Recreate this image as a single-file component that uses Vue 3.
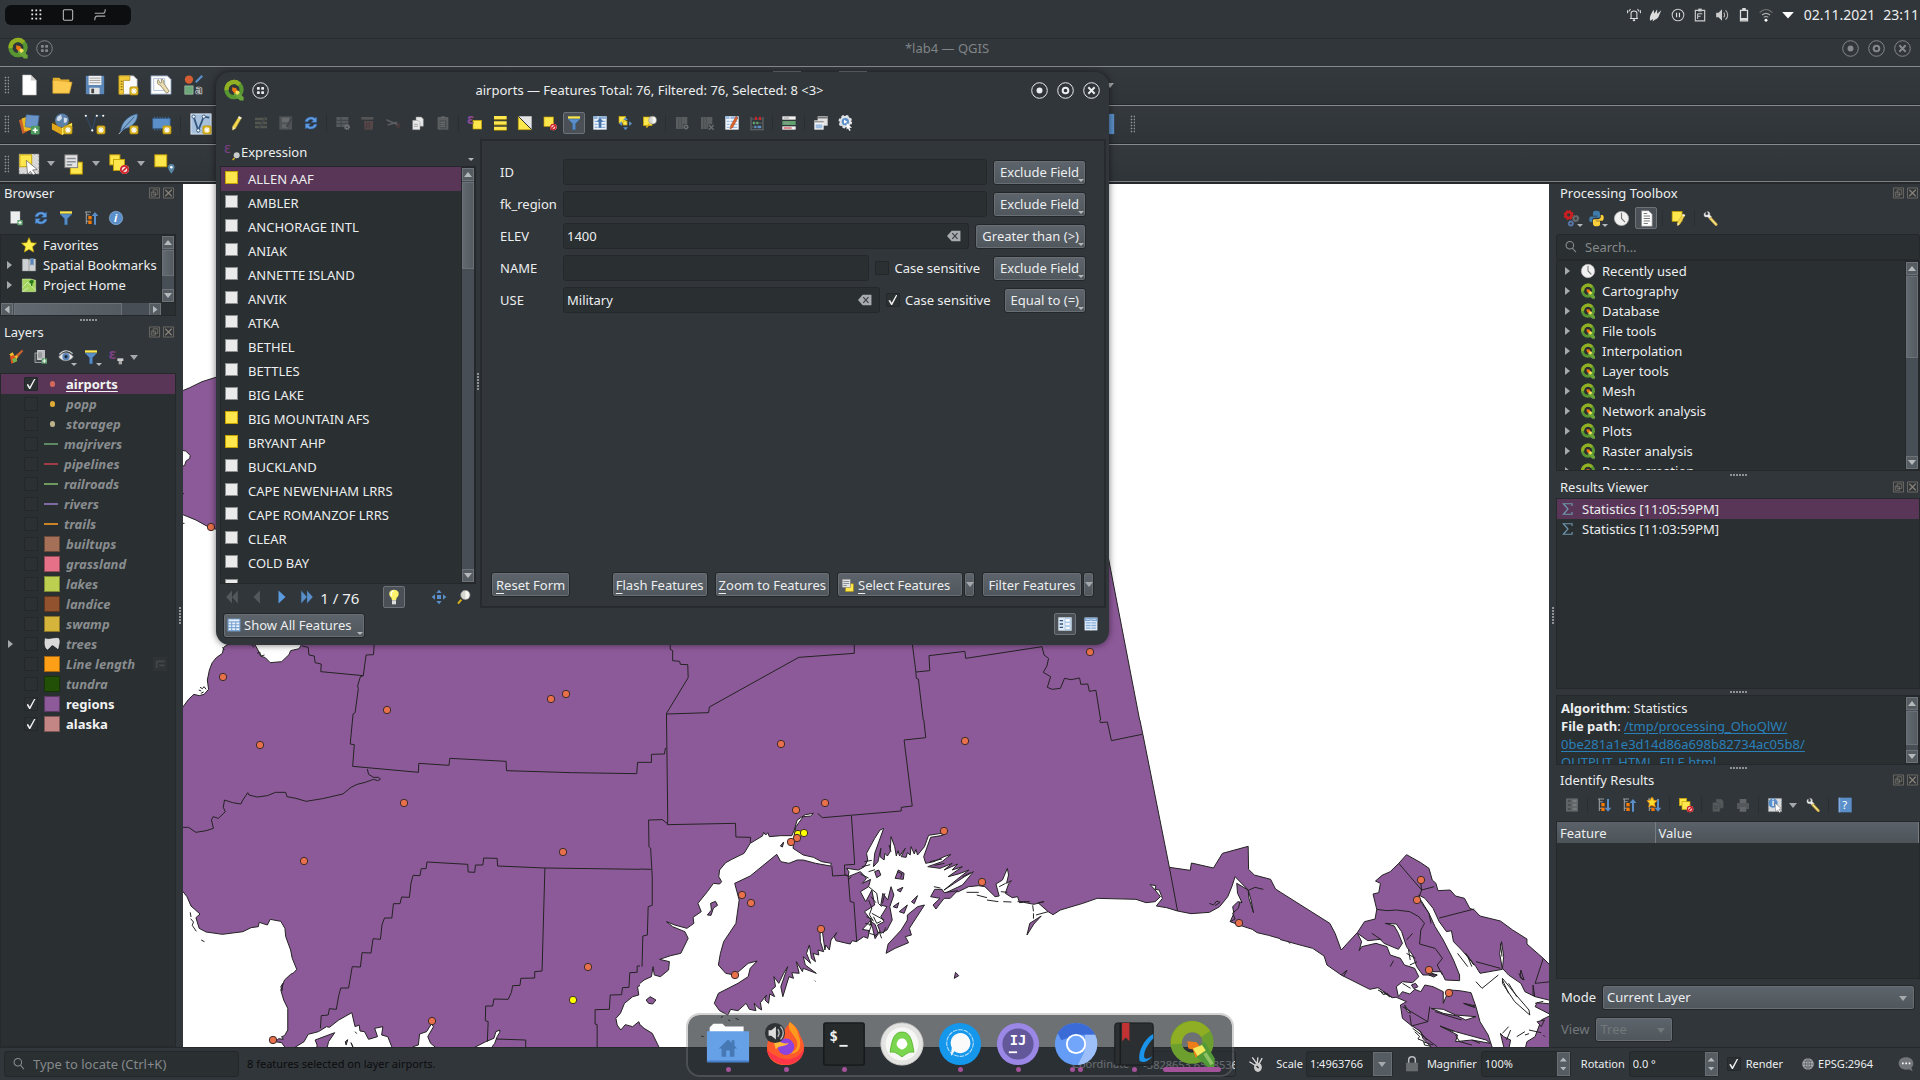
<script setup>
import { ref } from 'vue'

const star = (x, y) => `<rect x="${x}" y="${y}" width="9" height="9" rx="1.5" fill="#d9b21c" stroke="#a8860c" stroke-width=".6"/><path d="M${x + 4.5} ${y + 1.2}v6.6M${x + 1.2} ${y + 4.5}h6.6M${x + 2.2} ${y + 2.2}l4.6 4.6M${x + 6.8} ${y + 2.2}l-4.6 4.6" stroke="#fff" stroke-width="1.1"/>`
const sel = (x, y, s) => `<rect x="${x}" y="${y}" width="${s}" height="${s}" fill="#fde74c" stroke="#c4a000" stroke-width="1"/>`
const no = (x, y) => `<circle cx="${x}" cy="${y}" r="5" fill="#fff"/><circle cx="${x}" cy="${y}" r="4" fill="#f3d9d9" stroke="#cc2127" stroke-width="2"/><path d="M${x - 3} ${y + 3}l6-6" stroke="#cc2127" stroke-width="1.8"/>`
const table = (c, b) => `<rect x="2" y="2" width="20" height="20" fill="${c}"/><path d="M2 4h20" stroke="${b}" stroke-width="4"/><path d="M4 9.500h16M4 14h16M4 18.500h16" stroke="${b}" stroke-width="2"/><path d="M9 2v20" stroke="${c}" stroke-width="1.400"/>`
const tree = '<path d="M5 3v18M5 7h5M5 17h5M3 3h9" stroke="#9a9da0" stroke-width="1.6" fill="none"/><rect x="8" y="9" width="5" height="5" fill="#f57900"/><rect x="8" y="16" width="5" height="5" fill="#f57900"/>'
const funnel = '<path d="M3 6h18l-7 7v9h-4v-9z" fill="#5b8fc9" stroke="#3a6ea5" stroke-width="1"/><rect x="3" y="2" width="18" height="3.4" fill="#fde74c"/>'
const wrench = '<path d="M5 3c-3 1-3 6 0 7l3 0 3 3 3-3-3-3c1-3-1-5-4-5l2 3-1 2-3 0z" fill="#eee" stroke="#999" stroke-width=".6"/><path d="M12 12l8 8.5" stroke="#d8b94a" stroke-width="4" stroke-linecap="round"/><path d="M12 12l8 8.5" stroke="#fae8a0" stroke-width="1.5"/>'
const refresh = '<path d="M3 10C4 3 14 1 18 5l2.500-2v8h-8l3-3c-4-3-7-1-8 2zM21 14c-1 7-11 9-15 5l-2.500 2v-8h8l-3 3c4 3 7 1 8-2z" fill="#5f9be0" stroke="#2d66ab" stroke-width=".7"/>'
const pencil = '<path d="M16.500 2l4 2-9 16-4.500 3-.5-5.500z" fill="#f3d64e" stroke="#97832b" stroke-width=".7"/><path d="M16.500 2l4 2-1.500 2.500-4-2z" fill="#eee"/><path d="M7 18l3.500 2-3.500 3z" fill="#f7ead0"/>'
const qgis = '<circle cx="12" cy="11.500" r="8.300" fill="none" stroke="#589632" stroke-width="4.600"/><path d="M4 12a8 8 0 0 1 14-6" fill="none" stroke="#93b023" stroke-width="4.600"/><path d="M13.500 11l9 9v3.500h-4l-7-7z" fill="#6ba539"/><path d="M10 9l4.500 1 1.500 4-3.500 1.500-2.500-3z" fill="#ee7913"/><path d="M14 13l2.500-.5 2 2.500-3 2.500-2-2z" fill="#f5e35a"/>'
const doc = (a, b) => `<path d="M9 3h8l3 3v11H9z" fill="${a}" stroke="${b}" stroke-width=".8"/><path d="M4 8h8l3 3v11H4z" fill="${a}" stroke="${b}" stroke-width=".8"/><path d="M6 14h6M6 17h6" stroke="${b}"/>`
const lens = '<path d="M3 22l5-6" stroke="#d8b21c" stroke-width="3"/><circle cx="14" cy="9" r="7" fill="#d6d6d0" stroke="#888" stroke-width="1"/><path d="M14 3a6 6 0 0 1 0 12z" fill="#f4f4f0"/>'
const pan = '<path d="M12 1l4 5h-8zM12 23l4-5h-8zM1 12l5-4v8zM23 12l-5-4v8zM9 9h6v6H9z" fill="#5b8fc9"/>'
const gear = (x, y, r, c) => `<circle cx="${x}" cy="${y}" r="${r}" fill="none" stroke="${c}" stroke-width="${r * 0.9}"/><circle cx="${x}" cy="${y}" r="${r * 1.4}" fill="none" stroke="${c}" stroke-width="${r * 0.6}" stroke-dasharray="${r * 0.6} ${r * 0.5}"/>`

const icons = {
  qgis, refresh, pencil, funnel, wrench, lens, pan,
  newdoc: '<path d="M5 1h9l6 6v16H5z" fill="#fff" stroke="#aaa" stroke-width=".6"/><path d="M14 1v6h6z" fill="#ccc"/>',
  open: '<path d="M2 4h7l2 2h9v4H2z" fill="#e0ad2d"/><path d="M2 21V7h4l17 2-3 12z" fill="#fcca4e" stroke="#d9a32a" stroke-width=".7"/>',
  save: '<path d="M2 2h20v20H2z" fill="#5b86b8"/><rect x="5" y="2" width="14" height="10" fill="#f1f1f1"/><path d="M6 4.500h12M6 7h12M6 9.500h12" stroke="#999" stroke-width="1"/><rect x="6" y="15" width="11" height="7" fill="#e4e4e4"/><rect x="8" y="16" width="3" height="5" fill="#444"/>',
  layout: '<path d="M3 2h15l4 4v16H3z" fill="#fafafa" stroke="#aaa" stroke-width=".7"/><path d="M2 2h12v5H7v15H2z" fill="#f3c93a" stroke="#ad8a10" stroke-width=".8"/><path d="M4 8h2M4 11h2M4 14h2M4 17h2" stroke="#6e5a10"/>' + star(14, 14),
  manager: '<path d="M1 2h18l4 4v16H1z" fill="#fdfdfd" stroke="#7188a8" stroke-width=".8"/><path d="M4 5h12v13H4z" fill="none" stroke="#8fa9cd" stroke-width=".7"/><path d="M9 6c-2 2-1 6 2 6l7 9 3-2-6-9c1-3-2-5-3-4l1 3-2 1z" fill="#eadcae" stroke="#7c7356" stroke-width=".8"/>',
  style: '<circle cx="6.500" cy="6" r="4.500" fill="#d55e32"/><path d="M14 9l7-7" stroke="#5b8fc9" stroke-width="2.400"/><rect x="2" y="13" width="9" height="9" fill="#6ea77a" stroke="#a9cbb0" stroke-width=".7"/><text x="13" y="22" font-size="14" font-weight="bold" fill="none" stroke="#ccc" stroke-width=".8">a</text>',
  source: '<path d="M1 8l9-4 4 14-9 5z" fill="#c8622c"/><path d="M4 6l10-3 2 15-9 2z" fill="#e6b821"/><path d="M9 2l14 1-2 14-13-2z" fill="#6a94c8" stroke="#4470a5" stroke-width=".7"/><rect x="14" y="14" width="9.500" height="9.500" rx="1.500" fill="#4f9a5f"/><path d="M18.750 16v5.500M16 18.750h5.500" stroke="#fff" stroke-width="1.700"/>',
  geopackage: '<path d="M1 11l11 5v8L1 18zM12 16l11-5v7l-11 6z" fill="#e0a71a"/><path d="M1 11l11-5 11 5-11 5z" fill="#5e4a10"/><path d="M12 16l11-5v7l-11 6z" fill="#fdeb53"/><circle cx="12" cy="8" r="7.500" fill="#5b80aa"/><path d="M7 4l4-2 1 4-3 3-3-1zM14 5l4 1-1 4-3 1z" fill="#cfdbe8"/>' + star(14, 14),
  shape: '<path d="M2 3l7 16L13 3M13 3h8" fill="none" stroke="#2f4a66" stroke-width="1.300"/><g fill="#fff"><circle cx="2" cy="3" r="1.200"/><circle cx="9" cy="19" r="1.200"/><circle cx="14" cy="3" r="1.200"/><circle cx="21" cy="3" r="1.200"/></g>' + star(14, 14),
  spatialite: '<path d="M2 23L20 3" stroke="#bcd" stroke-width="1"/><path d="M4 20C5 10 12 3 22 1c1 7-5 14-13 16z" fill="#7fa8d0" stroke="#3e6a9a" stroke-width=".8"/><path d="M6 18L19 4" stroke="#2e5680" stroke-width="1"/>' + star(14, 14),
  memory: '<path d="M5 4v15M8 4v15M11 4v15M14 4v15M17 4v15M20 4v15" stroke="#43678f" stroke-width="1.200"/><rect x="3" y="6" width="19" height="11" fill="#5b8fc9" stroke="#33608f" stroke-width=".8"/>' + star(14, 14),
  virtual: '<rect x="1" y="1" width="22" height="22" fill="#a7c1dd" stroke="#dfe8f2"/><path d="M4 4l5 15L15 4l6 1" fill="none" stroke="#31557c" stroke-width="2"/><g fill="#fff" stroke="#31557c"><circle cx="4" cy="4" r="1.800"/><circle cx="9" cy="19" r="1.800"/><circle cx="15" cy="4" r="1.800"/></g>' + star(14, 14),
  help: '<rect x="2" y="1" width="20" height="22" fill="#5b8fc9"/><path d="M4 1v22" stroke="#a9c5e5"/><text x="8" y="18" font-size="17" fill="#fff">?</text>',
  select: '<path d="M1 1h22v22H1z" fill="#d8d8d8" stroke="#555" stroke-dasharray="2 2"/>' + sel(2, 2, 13) + '<path d="M9 8l12 10-5 .5 3 4-2.500 1.500-3-4-3 3.500z" fill="#fff" stroke="#333" stroke-width=".6"/>',
  selform: sel(8, 10, 13) + '<rect x="2" y="2" width="14" height="14" fill="#e3e3e3" stroke="#777"/><path d="M4 6h10M4 9.500h10M4 13h6" stroke="#8a9099" stroke-width="1.800"/>',
  desel: sel(2, 2, 11) + sel(6, 7, 12) + no(18, 18),
  selloc: sel(2, 2, 13) + '<path d="M20 12a3.500 3.500 0 0 1 3.500 3.500c0 3-3.500 7-3.500 7s-3.500-4-3.500-7a3.500 3.500 0 0 1 3.500-3.500z" fill="#5a86a5"/><circle cx="20" cy="15.500" r="1.400" fill="#fff"/>',
  add: '<rect x="4" y="2" width="14" height="18" fill="#eee" stroke="#aaa" stroke-width=".6"/><rect x="14" y="15" width="8" height="8" rx="1" fill="#5fa06c"/><path d="M18 16.500v5M15.500 19h5" stroke="#fff" stroke-width="1.500"/>',
  collapse: tree + '<path d="M18 3l5 6h-3.500v13h-3V9H13z" fill="#5b8fc9"/>',
  expand: tree + '<path d="M18 22l5-6h-3.500V3h-3v13H13z" fill="#5b8fc9"/>',
  expandnew: tree + '<path d="M18 22l5-6h-3.500V3h-3v13H13z" fill="#5b8fc9"/><path d="M9 0l2.500 5 5 .5-4 4 1.500 5.500-5-3-5 3 1.500-5.500-4-4 5-.5z" fill="#fde02c" stroke="#f58a00" stroke-width="1"/>',
  info: '<circle cx="12" cy="12" r="10" fill="#5b8fc9" stroke="#8fb3dd"/><text x="9" y="18" font-size="16" font-style="italic" font-weight="bold" fill="#fff">i</text>',
  fav: '<path d="M12 1l3.200 7.500 8 .7-6 5.400 1.800 8L12 18.500 5 22.600l1.800-8-6-5.400 8-.7z" fill="#fdf04c" stroke="#c9a400" stroke-width=".9"/>',
  bookmark: '<path d="M2 3h9l1 2 1-2h9v18H2z" fill="#cfd2d4" stroke="#888" stroke-width=".7"/><path d="M12 5v16" stroke="#888"/><path d="M14 2h5v11l-2.500-2-2.500 2z" fill="#5b86b8"/>',
  home: '<path d="M2 3h12l8 2v17H2z" fill="#a4d65e" stroke="#d8efb4" stroke-width=".8"/><path d="M2 16l8-8 12 12M2 22l9-6" stroke="#e9f7d2" fill="none"/><path d="M15 5c4-2 6 3 2 5l0 4-2-1 0-3c-4-1-3-5 0-5z" fill="#2b7a1e"/>',
  stylebrush: '<path d="M2 8l5-3 3 6 9-7-8 15z" fill="#f2c230"/><path d="M12 9l9-8 2 2-8 9z" fill="#c8622c"/><path d="M3 11l6-2 5 9-9 4z" fill="#e0511f"/><path d="M6 15l6-2 2 5-6 3z" fill="#6eb54b"/>',
  addgroup: '<rect x="3" y="6" width="12" height="14" fill="#444b50" stroke="#ccc"/><rect x="7" y="2" width="10" height="14" fill="#b9bcbe" stroke="#eee"/><path d="M9 5v8M12 5v8" stroke="#555"/><rect x="13" y="14" width="8" height="8" fill="#5fa06c"/><path d="M17 15v6M14 18h6" stroke="#fff" stroke-width="1.400"/>',
  eye: '<path d="M1 12c5-8 16-9 22 0-6 7-16 8-22 0z" fill="#e8e8e8" stroke="#888"/><circle cx="12" cy="11.500" r="5.500" fill="#5b86b8"/><circle cx="12" cy="11.500" r="2.400" fill="#1c2d3e"/><path d="M2 8C8 1 16 1 22 7" fill="none" stroke="#cfd3d6" stroke-width="1.800"/>',
  epsfilter: '<text x="1" y="15" font-size="22" font-weight="bold" fill="#7b4184">ε</text><rect x="14" y="14" width="9" height="4" fill="#ccc"/><path d="M16 18v5h5v-5" fill="#aaa"/>',
  epslens: '<text x="0" y="14" font-size="22" fill="#7b4184">ε</text><path d="M13 24l3-3" stroke="#d8b21c" stroke-width="2.500"/><circle cx="19" cy="17" r="4.500" fill="#ccc"/>',
  epssel: sel(9, 8, 13) + '<text x="0" y="14" font-size="21" font-weight="bold" fill="#8a4a94">ε</text>',
  multiedit: '<path d="M3 6h18M3 12h18M3 18h18" stroke="#54574f" stroke-width="4"/><path d="M19 3L9 20" stroke="#44484b" stroke-width="3"/>',
  saveoff: '<path d="M2 2h19v20H2z" fill="#4f5356"/><rect x="6" y="4" width="11" height="7" fill="#686b6d"/><rect x="6" y="14" width="9" height="6" fill="#626567"/><path d="M21 4L13 18" stroke="#42464a" stroke-width="3"/>',
  addfeat: '<path d="M2 3h18v15H2z" fill="#555a5d"/><path d="M2 8h18M2 13h18M9 3v15" stroke="#3d4246" stroke-width="1.300"/>' + gear(18, 18, 2.6, '#6c6f72'),
  trash: '<path d="M2 3h18v4H2z" fill="#565555"/><path d="M6 9h14l-1 13H7z" fill="#564648"/><path d="M10 11v9M14 11v9" stroke="#433a3c" stroke-width="1.500"/>',
  cut: '<path d="M2 7l18 8M4 15l14-4" stroke="#5a5e61" stroke-width="2.400"/><circle cx="20" cy="16" r="2.500" fill="none" stroke="#5a3b3e" stroke-width="1.500"/>',
  copy: doc('#e9e9e9', '#8d8d8d'), copyoff: doc('#54595c', '#3d4245'),
  paste: '<path d="M4 3h16v19H4z" fill="#5b5f62"/><path d="M7 8h10v12H7z" fill="#4a4e51"/><path d="M8 11h7M8 14h7M8 17h7M9 3h6" stroke="#6d7174" stroke-width="1.600"/>',
  selall: '<path d="M3 4h19M3 12h19M3 20h19" stroke="#fde74c" stroke-width="5"/><path d="M3 7h19M3 15h19M3 23h19" stroke="#c4a000" stroke-width="1"/>',
  invert: '<path d="M2 2v20h20z" fill="#fde74c" stroke="#c4a000"/><path d="M2 2h20v20z" fill="#e4e4e4"/><path d="M2 2l20 20" stroke="#333" stroke-width="1.500"/>',
  desel1: sel(3, 3, 14) + no(17, 18),
  movetop: table('#e9f1fb', '#8db2dc') + '<path d="M12 4l5 6h-3v9h-4v-9H7z" fill="#4470a5"/>',
  panmap: sel(3, 2, 10) + '<g transform="translate(2 2) scale(.9)">' + pan + '</g>' + sel(9, 9, 6),
  zoommap: sel(2, 3, 13) + '<g transform="translate(4 0) scale(.85)">' + lens + '</g>',
  newfield: '<path d="M3 3h11v18H3zM14 3h6v11h-6z" fill="#595d60"/><path d="M7 3v18M11 3v18" stroke="#44484b"/>' + gear(18, 18, 2.4, '#6c6f72'),
  delfield: '<path d="M3 3h11v18H3zM14 3h6v11h-6z" fill="#595d60"/><path d="M7 3v18M11 3v18" stroke="#44484b"/><path d="M15 15l7 7M22 15l-7 7" stroke="#6c6f72" stroke-width="2"/>',
  calc: table('#f3f7fc', '#9dbde2') + '<path d="M18 2l3 2-8 15-4 2 1-5z" fill="#d9622e" stroke="#8a3d18" stroke-width=".6"/>',
  abacus: '<path d="M3 3v19M21 3v19M2 22h20" stroke="#686b6d" stroke-width="1.600"/><path d="M4 6h16M4 12h16M4 18h16" stroke="#888" stroke-width=".8"/><path d="M9 5h3M15 5h3" stroke="#cc2127" stroke-width="5"/><path d="M6 12h3M11 12h3" stroke="#5fa06c" stroke-width="4"/><path d="M8 18h3M13 18h5" stroke="#5b8fc9" stroke-width="4"/>',
  condfmt: '<rect x="2" y="2" width="20" height="5" fill="#f1f1f1"/><rect x="2" y="9" width="20" height="6" fill="#5fa06c"/><rect x="2" y="17" width="20" height="5" fill="#f1f1f1"/><path d="M4 4.500h8M4 12h9" stroke="#999" stroke-width="1.500"/><path d="M4 19.500h12" stroke="#cc2127" stroke-width="1.500"/>',
  dockwin: '<rect x="7" y="2" width="15" height="14" fill="#e3e3e3"/><path d="M7 4h15" stroke="#777" stroke-width="2.500"/><rect x="2" y="8" width="14" height="14" fill="#f3f3f3"/><path d="M2 10h14" stroke="#999" stroke-width="2.500"/><path d="M4 14h10v6H4z" fill="#9dbde2"/>',
  actions: gear(11, 10, 6, '#dfe3e8') + '<circle cx="11" cy="10" r="5.500" fill="#5b8fc9"/><path d="M9 7l5 3-5 3z" fill="#fff"/><path d="M13 12l8 7-4 0 2 4-2 1-2-4-2 2z" fill="#fff"/>',
  gears: gear(8, 7, 4.2, '#cc1f1f') + gear(18, 12, 3, '#686c6f') + gear(11, 19, 2.6, '#5878a8'),
  python: '<path d="M12 1c-5 0-5 2-5 4v3h6v1H4c-3 0-3 8 0 8h2v-3c0-2 2-3 4-3h5c2 0 2-1 2-3V5c0-3-2-4-5-4z" fill="#3f7cac"/><path d="M12 23c5 0 5-2 5-4v-3h-6v-1h9c3 0 3-8 0-8h-2v3c0 2-2 3-4 3H9c-2 0-2 1-2 3v3c0 3 2 4 5 4z" fill="#fdd03b"/>',
  clock: '<circle cx="12" cy="12" r="10" fill="#f1f1f1" stroke="#bbb"/><path d="M12 4v8l5 5" stroke="#777" stroke-width="1.600" fill="none"/>',
  results: '<path d="M5 1h10l5 5v17H5z" fill="#fff" stroke="#888"/><path d="M8 5h5M8 8.500h9M8 12h9M8 15.500h9M8 19h6" stroke="#777" stroke-width="1.400"/>',
  editinplace: sel(3, 2, 14) + '<g transform="translate(5 4) scale(.8)">' + pencil + '</g>',
  search: '<circle cx="10" cy="9" r="6.500" fill="none" stroke="#8b8f92" stroke-width="1.800"/><path d="M14.500 14l6 7" stroke="#8b8f92" stroke-width="1.800"/>',
  sigma: '<path d="M19 7V3H4l8 9-8 9h15v-4M4 3l8 9M19 3v4" fill="none" stroke="#6d96ad" stroke-width="2"/>',
  formoff: '<rect x="3" y="2" width="18" height="20" fill="#5f6467"/><path d="M6 6h4M6 12h4M6 18h4" stroke="#43484b" stroke-width="2"/><path d="M13 4h6v4h-6zM13 10h6v4h-6zM13 16h6v4h-6z" fill="#777b7e"/>',
  print: '<path d="M3 9h18v9H3z" fill="#54585b"/><path d="M7 3h10v6H7zM7 15h10v7H7z" fill="#626669"/>',
  identify: '<path d="M2 2h20v20H2z" fill="#d9dcdf" stroke="#777" stroke-dasharray="2 2"/><circle cx="9" cy="9" r="7" fill="#5b8fc9"/><text x="7" y="13" font-size="12" font-weight="bold" fill="#fff">i</text><path d="M12 9l10 9-4 .5 2.500 4-2 1-2.500-4-3 3z" fill="#fff" stroke="#444" stroke-width=".6"/>',
  first: '<path d="M12 1v22L2 12zM22 1v22L12 12z" fill="#53585c"/>',
  prev: '<path d="M17 1v22L6 12z" fill="#53585c"/>',
  next: '<path d="M6 1v22l12-11z" fill="#5b9be0"/>',
  last: '<path d="M2 1v22l10-11zM12 1v22l10-11z" fill="#5b8fc9" stroke="#31557c" stroke-width=".6"/>',
  bulb: '<path d="M12 1c8 0 9 8 4 12l-1 4H9l-1-4C3 9 4 1 12 1z" fill="#fbf36a"/><path d="M11 3c-4 1-4 5-2 7" stroke="#fff" stroke-width="2" fill="none"/><rect x="9" y="17" width="6" height="6" fill="#ddd"/>',
  formview: '<rect x="2" y="2" width="20" height="20" fill="#dfeaf7"/><path d="M4 7h5M4 12h5M4 17h5" stroke="#31557c" stroke-width="2"/><path d="M12 4h8v5h-8zM12 10h8v4h-8zM12 16h8v4h-8z" fill="#fff" stroke="#8db2dc" stroke-width="1"/>',
  tableview: '<rect x="1" y="1" width="22" height="22" fill="#e4eefa"/><path d="M1 4h22" stroke="#7ba4d2" stroke-width="6"/><path d="M3 10h18M3 14.500h18M3 19h18" stroke="#86aeda" stroke-width="2.400"/><path d="M12 3v20M3 4h7M14 4h7" stroke="#e9f1fb" stroke-width="1.200"/>',
  tablesm: '<rect x="1" y="1" width="22" height="22" fill="#7ba4d2"/><path d="M3 4h18M3 9h4M9 9h5M16 9h5M3 14h4M9 14h5M16 14h5M3 19h4M9 19h5M16 19h5" stroke="#e9f1fb" stroke-width="3"/>',
  lock: '<path d="M7 11V6a5 5 0 0 1 10 0v5" fill="none" stroke="#b9bcbe" stroke-width="2.200"/><path d="M3 10h18v13H3z" fill="#686b6d"/>',
  mouse: '<path d="M6 2l6 8M14 2l-1 8M2 8l8 5M20 3l-5 9" stroke="#ddd" stroke-width="1.800"/><ellipse cx="14" cy="16" rx="5.500" ry="6.500" fill="#ccc"/><path d="M12 14l3 3" stroke="#333" stroke-width="2"/>',
  globe: '<circle cx="12" cy="12" r="10" fill="#a9acae"/><path d="M2 12h20M12 2v20M4 7h16M4 17h16M12 2c-6 6-6 14 0 20M12 2c6 6 6 14 0 20" stroke="#54585b" fill="none" stroke-width="1.200"/>',
  bubble: '<path d="M12 2c7 0 11 4 11 9 0 3-1 5-3 7l2 5-6-3c-9 2-15-3-15-9 0-5 4-9 11-9z" fill="#72767a"/><path d="M6 11h2.500M11 11h2.500M16 11h2.500" stroke="#fff" stroke-width="2.500"/>',
  float: '<path d="M1 1h22v22H1z" fill="none" stroke="#8a8378" stroke-width="1.400"/><path d="M9 5h10v10H9zM5 10h9v9H5z" fill="none" stroke="#8a8378" stroke-width="1.400"/>',
  closebox: '<path d="M1 1h22v22H1z" fill="none" stroke="#8a8378" stroke-width="1.400"/><path d="M5 5l14 14M19 5L5 19" stroke="#8a8378" stroke-width="2.600"/>',
  apps: '<circle cx="12" cy="12" r="11" fill="none" stroke="currentColor" stroke-width="1.300"/><g fill="currentColor"><rect x="7" y="7" width="4" height="4" rx="1"/><rect x="13" y="7" width="4" height="4" rx="1"/><rect x="7" y="13" width="4" height="4" rx="1"/><rect x="13" y="13" width="4" height="4" rx="1"/></g>',
  wmin: '<circle cx="12" cy="12" r="11" fill="none" stroke="currentColor" stroke-width="1.400"/><circle cx="12" cy="12" r="4.200" fill="currentColor"/>',
  wmax: '<circle cx="12" cy="12" r="11" fill="none" stroke="currentColor" stroke-width="1.400"/><circle cx="12" cy="12" r="4" fill="none" stroke="currentColor" stroke-width="2.800"/>',
  wclose: '<circle cx="12" cy="12" r="11" fill="none" stroke="currentColor" stroke-width="1.400"/><path d="M7.500 7.500l9 9M16.500 7.500l-9 9" stroke="currentColor" stroke-width="2.800"/>',
  dots: '<path d="M4 4h3M11 4h3M18 4h3M4 11h3M11 11h3M18 11h3M4 18h3M11 18h3M18 18h3" stroke="#eee" stroke-width="3"/>',
  square: '<rect x="4" y="3" width="16" height="18" rx="2" fill="none" stroke="#bbb" stroke-width="1.800"/>',
  swap: '<path d="M3 9h14c3 0 4-3 4-7M21 14H7c-3 0-4 3-4 7" fill="none" stroke="#aaa" stroke-width="2"/>',
  bell: '<path d="M5 18h14M7 18V9c0-5 10-5 10 0v9M3 6l3-4M21 6l-3-4M1 9V4M23 9V4" fill="none" stroke="#ddd" stroke-width="1.800"/><path d="M10 21h4" stroke="#ddd" stroke-width="3"/>',
  flame: '<path d="M2 22C0 14 5 8 8 3l1 7 5-8v8l7-6-5 12-3 3-3 1-4 3 1-4z" fill="#ddd"/>',
  pause: '<circle cx="12" cy="12" r="10" fill="none" stroke="#ccc" stroke-width="1.800"/><path d="M9.500 8v8M14.500 8v8" stroke="#ddd" stroke-width="2"/>',
  clip: '<path d="M4 4h16v18H4z" fill="none" stroke="#ccc" stroke-width="2"/><path d="M9 1h6v5H9z" fill="#ccc"/><path d="M8 10h8M8 14h5M8 10v9" stroke="#ccc" stroke-width="1.800"/>',
  volume: '<path d="M2 8h4l6-6v20l-6-6H2z" fill="#ccc"/><path d="M15 8c2 2 2 6 0 8M18 4c5 4 5 12 0 16" fill="none" stroke="#bbb" stroke-width="1.800"/>',
  battery: '<path d="M6 4h12v18H6z" fill="none" stroke="#ddd" stroke-width="2.200"/><path d="M9 2h6M6 19h12" stroke="#ddd" stroke-width="4"/>',
  wifi: '<path d="M1 8C8 1 16 1 23 8" fill="none" stroke="#777" stroke-width="1.800"/><path d="M5 12c5-4 9-4 14 0M8 16c3-2 5-2 8 0" fill="none" stroke="#aaa" stroke-width="1.800"/><circle cx="12" cy="21" r="2.500" fill="#fff"/>',
  down: '<path d="M2 7h20l-10 11z" fill="#fff"/>',
  trees: '<path d="M2 4c6 3 14-2 20 0 2 5 0 9-1 15l-7-5c-3-2-4 3-9 6-4-3-4-10-3-16z" fill="#d9d9d9" stroke="#eee"/>',
  memlayer: '<path d="M1 1h22v22H1z" fill="#2e3336"/><path d="M7 8h12M7 8v10M11 14h8" stroke="#42484b" stroke-width="2.500"/>',
  dfolder: '<path d="M4 14V6l4-4h10l3 3h20v12z" fill="#fff"/><path d="M1 10h46v34H1z" fill="#66a0e6"/><path d="M1 43h46" stroke="#447fc9" stroke-width="2"/><path d="M14 29l10-10 4 4v-3h3v6l3 3h-3v9h-5v-7h-4v7h-5v-9z" fill="#4678b3"/>',
  dfirefox: '<path d="M24 6c2-2 4-4 4-6 10 7 10 11 12 16 8 12 3 31-17 31C8 47 1 35 4 22c1-6 3-9 6-12 2 4 6 5 9 6z" fill="#ff5a2c"/><path d="M28 0c10 7 8 12 11 18 3 16-7 18-15 16 8 0 14-5 12-13-2-7-12-12-8-21z" fill="#ff9a1f"/><path d="M3 30c3 20 38 24 41-2-6 12-20 20-41 2z" fill="#ff3647"/><circle cx="24" cy="27" r="9" fill="#8d43dd"/><path d="M10 20c7-1 9 5 17 3-4 5-11 2-14 7z" fill="#ffb83a"/><circle cx="12" cy="12" r="11" fill="#2f3336"/><path d="M5 9h3l5-4v14l-5-4H5z" fill="#ddd"/><path d="M15 8c2 2 2 6 0 8M18 5c4 4 4 10 0 14" fill="none" stroke="#bbb" stroke-width="1.500"/>',
  dterm: '<rect x="2" y="1" width="44" height="46" rx="2" fill="#262a2b" stroke="#141718" stroke-width="1.500"/><text x="8" y="21" font-size="16" font-weight="bold" fill="#f2f2f2" font-family="DejaVu Sans Mono, monospace">$</text><path d="M19 26h9" stroke="#f2f2f2" stroke-width="2"/>',
  dandroid: '<circle cx="24" cy="24" r="23" fill="#e3e3e1" stroke="#cfcfcd"/><circle cx="24" cy="24" r="18" fill="#f7f7f6"/><path d="M24 11c8 0 11 7 13 22-5-1-7 1-13 5-6-4-8-6-13-5 2-15 5-22 13-22z" fill="#7bd64f" stroke="#5cb331"/><path d="M24 18c4 0 5 3 6 6-1 4-3 5-6 6-3-1-5-2-6-6 1-3 2-6 6-6z" fill="#fff"/>',
  dsignal: '<circle cx="24" cy="24" r="23" fill="#1597ec"/><circle cx="24" cy="23" r="14.500" fill="none" stroke="#b6defa" stroke-width="1.200" stroke-dasharray="5 1"/><path d="M24 12a11 11 0 1 1-6 20l-4 5 1-9a11 11 0 0 1 9-16z" fill="#fafafa"/>',
  didea: '<circle cx="24" cy="24" r="23" fill="#9a87e6"/><circle cx="24" cy="24" r="17" fill="#62589a"/><text x="15" y="25" font-size="15" font-weight="bold" fill="#fff" font-family="DejaVu Sans Mono, monospace">IJ</text><path d="M14 33h9" stroke="#fff" stroke-width="2"/>',
  dchrome: '<circle cx="24" cy="24" r="23" fill="#659df6"/><path d="M24 1a23 23 0 0 1 21 13H24L8 20 4 12A23 23 0 0 1 24 1z" fill="#3b6bd6"/><path d="M45 14a23 23 0 0 1-19 33l7-14 1-19z" fill="#9ec0fa"/><circle cx="24" cy="24" r="11" fill="#fff"/><circle cx="24" cy="24" r="9" fill="#71a6fb"/>',
  dbook: '<rect x="3" y="1" width="42" height="46" rx="3" fill="#2b2f31" stroke="#17191a"/><path d="M9 1v46" stroke="#191b1c" stroke-width="1.500"/><path d="M11 1h8v20l-4-4-4 4z" fill="#c33232"/><path d="M45 13c-10 5-17 20-15 29 2 3 10 2 14-5-5 4-9 4-9 0 0-7 6-15 10-19z" fill="#1a93ea"/>',
  dqgis: '<circle cx="24" cy="22" r="17.500" fill="none" stroke="#6c9f2d" stroke-width="12"/><path d="M7 24A17.500 17.500 0 0 1 39 13" fill="none" stroke="#90ae24" stroke-width="12"/><path d="M29 27l9-5 11 18-1 9h-7L28 37z" fill="#529a38"/><path d="M38 34l8 12" stroke="#8fc266" stroke-width="4"/><path d="M19 21l10 1 7 9-8 8-3-9-5-1z" fill="#ee7d18"/><path d="M25 29l10-4 4 6-9 6z" fill="#f2e95c"/>'
}

const row1 = ['newdoc', 'open', 'save', 'layout', 'manager', 'style']
const row2 = ['source', 'geopackage', 'shape', 'spatialite', 'memory', '|', 'virtual']
const row3 = ['select', 'selform', 'desel']
const browserTools = ['add', 'refresh', 'funnel', 'collapse', 'info']
const layerTools = [{ name: 'stylebrush' }, { name: 'addgroup' }, { name: 'eye', menu: 1 }, { name: 'funnel', menu: 1 }, { name: 'epsfilter' }]
const dlgTools = ['pencil', 'multiedit', 'saveoff', 'refresh', '|', 'addfeat', 'trash', 'cut', 'copy', 'paste', '|', 'epssel', 'selall', 'invert', 'desel1', 'funnel', 'movetop', 'panmap', 'zoommap', '|', 'newfield', 'delfield', 'calc', 'abacus', '|', 'condfmt', '|', 'dockwin', 'actions']
const procTools = [{ name: 'gears', menu: 1 }, { name: 'python', menu: 1 }, { name: 'clock' }, { name: 'results', on: 1 }, { name: '|' }, { name: 'editinplace' }, { name: '|' }, { name: 'wrench' }]
const idTools = ['formoff', '|', 'expand', 'collapse', 'expandnew', '|', 'desel', '|', 'copyoff', 'print', '|', 'identify', 'v', 'wrench', '|', 'help']
const tray = ['bell', 'flame', 'pause', 'clip', 'volume', 'battery', 'wifi', 'down']

const layers = ref([
  { n: 'airports', k: 'pt', c: '#d4695a', on: true, cur: true },
  { n: 'popp', k: 'pt', c: '#e0ab35' },
  { n: 'storagep', k: 'pt', c: '#bfb28b' },
  { n: 'majrivers', k: 'ln', c: '#5d8a63' },
  { n: 'pipelines', k: 'ln', c: '#a23c44' },
  { n: 'railroads', k: 'ln', c: '#6f9a5f' },
  { n: 'rivers', k: 'ln', c: '#7d6aa0' },
  { n: 'trails', k: 'ln', c: '#c98428' },
  { n: 'builtups', k: 'sq', c: '#a47158' },
  { n: 'grassland', k: 'sq', c: '#e77089' },
  { n: 'lakes', k: 'sq', c: '#bccf50' },
  { n: 'landice', k: 'sq', c: '#91522d' },
  { n: 'swamp', k: 'sq', c: '#d5b43c' },
  { n: 'trees', k: 'ic', exp: true },
  { n: 'Line length', k: 'sq', c: '#ff9e17', mem: true },
  { n: 'tundra', k: 'sq', c: '#225006' },
  { n: 'regions', k: 'sq', c: '#8d5a99', on: true },
  { n: 'alaska', k: 'sq', c: '#c48684', on: true }
])
const features = ['ALLEN AAF', 'AMBLER', 'ANCHORAGE INTL', 'ANIAK', 'ANNETTE ISLAND', 'ANVIK', 'ATKA', 'BETHEL', 'BETTLES', 'BIG LAKE', 'BIG MOUNTAIN AFS', 'BRYANT AHP', 'BUCKLAND', 'CAPE NEWENHAM LRRS', 'CAPE ROMANZOF LRRS', 'CLEAR', 'COLD BAY', '']
const picked = ['ALLEN AAF', 'BIG MOUNTAIN AFS', 'BRYANT AHP']
const toolbox = ['Recently used', 'Cartography', 'Database', 'File tools', 'Interpolation', 'Layer tools', 'Mesh', 'Network analysis', 'Plots', 'Raster analysis', 'Raster creation']
const form = ref([
  { id: 'ID', v: '', b: 'Exclude Field' },
  { id: 'fk_region', v: '', b: 'Exclude Field' },
  { id: 'ELEV', v: '1400', b: 'Greater than (>)', clear: true },
  { id: 'NAME', v: '', b: 'Exclude Field', cs: true, on: false },
  { id: 'USE', v: 'Military', b: 'Equal to (=)', clear: true, cs: true, on: true }
])
const dock = [
  ['dfolder', 1], ['dfirefox', 1], ['dterm', 1], ['dandroid', 0], ['dsignal', 1], ['didea', 1], ['dchrome', 2], ['dbook', 1], ['dqgis', 9]
]
const pins = [
  [211, 527], [223, 677], [387, 710], [551, 699], [566, 694], [260, 745], [404, 803], [304, 861], [563, 852], [588, 967], [273, 1040], [432, 1021],
  [781, 744], [965, 741], [825, 803], [796, 810], [944, 831], [982, 882], [742, 895], [751, 903], [821, 929], [735, 975], [1090, 652],
  [1239, 923], [1421, 880], [1417, 900], [1429, 970], [1449, 993], [573, 1000, 1], [798, 834, 1], [804, 833, 1], [797, 838], [791, 842]
]
</script>

<template>
  <div class="desk">
    <header class="topbar">
      <div class="pill">
        <svg v-for="n in ['dots', 'square', 'swap']" :key="n" class="i14" viewBox="0 0 24 24" v-html="icons[n]" />
      </div>
      <div class="tray">
        <svg v-for="n in tray" :key="n" class="i14" viewBox="0 0 24 24" v-html="icons[n]" />
        <time>02.11.2021</time><time>23:11</time>
      </div>
    </header>

    <div class="wintitle">
      <svg class="i24" viewBox="0 0 24 24" v-html="icons.qgis" />
      <svg class="i18 dim" viewBox="0 0 24 24" v-html="icons.apps" />
      <h1>*lab4 — QGIS</h1>
      <svg v-for="n in ['wmin', 'wmax', 'wclose']" :key="n" class="i18 dim ctl" viewBox="0 0 24 24" v-html="icons[n]" />
    </div>

    <nav class="mainbar">
      <i class="grip" />
      <button v-for="n in row1" :key="n" :aria-label="n"><svg class="i24" viewBox="0 0 24 24" v-html="icons[n]" /></button>
      <span class="covered one" />
      <button class="toggled" aria-label="identify" />
      <span class="covered two" />
      <button class="toggled" aria-label="statistics" />
      <span class="covered three" />
      <i class="arrow" />
    </nav>
    <nav class="mainbar">
      <i class="grip" />
      <template v-for="n in row2" :key="n">
        <i v-if="n === '|'" class="sep" />
        <button v-else :aria-label="n"><svg class="i24" viewBox="0 0 24 24" v-html="icons[n]" /></button>
      </template>
      <span class="covered" />
      <button aria-label="help"><svg class="i24" viewBox="0 0 24 24" v-html="icons.help" /></button>
      <i class="grip late" />
    </nav>
    <nav class="mainbar last">
      <i class="grip" />
      <template v-for="n in row3" :key="n">
        <button :aria-label="n"><svg class="i24" viewBox="0 0 24 24" v-html="icons[n]" /></button><i class="arrow" />
      </template>
      <button aria-label="select by location"><svg class="i24" viewBox="0 0 24 24" v-html="icons.selloc" /></button>
    </nav>

    <main class="work">
      <aside class="left">
        <div class="docks">
          <h2>Browser<span><svg v-for="n in ['float', 'closebox']" :key="n" class="i11" viewBox="0 0 24 24" v-html="icons[n]" /></span></h2>
          <div class="tools">
            <button v-for="n in browserTools" :key="n" :aria-label="n"><svg class="i16" viewBox="0 0 24 24" v-html="icons[n]" /></button>
          </div>
          <div class="box browser">
            <div class="brow">
              <ul class="tree">
                <li><i class="exp none" /><svg class="i16" viewBox="0 0 24 24" v-html="icons.fav" />Favorites</li>
                <li><i class="exp" /><svg class="i16" viewBox="0 0 24 24" v-html="icons.bookmark" />Spatial Bookmarks</li>
                <li><i class="exp" /><svg class="i16" viewBox="0 0 24 24" v-html="icons.home" />Project Home</li>
              </ul>
              <div class="vs"><b class="up" /><em class="t26" /><s /><b class="dn" /></div>
            </div>
            <div class="hs"><b class="lf" /><em /><s /><b class="rt" /><u /></div>
          </div>
          <i class="hgrip" />
          <h2>Layers<span><svg v-for="n in ['float', 'closebox']" :key="n" class="i11" viewBox="0 0 24 24" v-html="icons[n]" /></span></h2>
          <div class="tools">
            <button v-for="t in layerTools" :key="t.name" :aria-label="t.name"><svg class="i16" viewBox="0 0 24 24" v-html="icons[t.name]" /><i v-if="t.menu" class="mini" /></button>
            <i class="arrow" />
          </div>
          <ul class="box layers">
            <li v-for="l in layers" :key="l.n" :class="{ on: l.on, cur: l.cur }">
              <i class="exp" :class="{ none: !l.exp }" />
              <label>
                <input v-model="l.on" type="checkbox">
                <svg v-if="l.k === 'ic'" class="sym" viewBox="0 0 24 24" v-html="icons.trees" />
                <span v-else class="sym" :class="l.k"><i :style="{ background: l.c }" /></span>
                <span class="nm">{{ l.n }}</span>
              </label>
              <svg v-if="l.mem" class="i16 mem" viewBox="0 0 24 24" v-html="icons.memlayer" />
            </li>
          </ul>
        </div>
        <div class="split"><i class="vgrip" /></div>
      </aside>

      <section class="map">
        <svg viewBox="183 184 1366 863" preserveAspectRatio="xMinYMin slice">
          <rect x="183" y="184" width="1366" height="863" fill="#fff" />
          <svg class="tile" x="0" y="360" width="640" height="360" viewBox="0 0 1568 1080" preserveAspectRatio="none">
            <path class="land" d="M440 96L465 83 495 65 560 40V520L530 508 505 497 480 480 460 470 440 460V320L452 317 456 303 465 295 466 286 455 273 440 270z" />
            <path class="land" d="M562 850L548 862 545 880 530 893 520 908 513 930 508 960 511 988 500 1003 488 1007 475 1003 462 1018 447 1043 435 1060V1100H1600V850H740L733 866 712 872 708 884 690 905 662 908 650 893 638 888 632 870 625 855z" />
            <path class="isle" d="M447 401h4M447 490h5M490 982l6 4 4-6 5 8M487 990l6 3M492 1000l7-4M618 858l5 4M630 880l6-4 4 12 8-3M545 862l5 8" />
            <path class="bd" d="M740 858L755 862 757 885 770 888 772 908 787 912 786 935 890 947 897 885 915 884 917 850M890 947L883 950 876 978 878 985 870 1058 865 1062 863 1090" />
          </svg>
          <svg class="tile" x="640" y="360" width="640" height="360" viewBox="0 0 1568 1080" preserveAspectRatio="none">
            <path class="land" d="M-10 800L1147 590 1232 1130H-10z" />
            <path class="bd" d="M74 850V868L80 872V902L97 904 99 913 117 914 118 953 65 1060 65 1090M65 1062L168 1058 170 1041 389 892 525 880V850M667 850L676 936 710 932 708 887 796 874 798 895 985 860 990 885 1001 895 997 918 988 937 1006 950 998 982 1010 988 1030 985 1040 955 1056 959 1077 954 1080 973 1097 972 1101 994 1117 991 1130 1090M676 936L677 955 682 957 695 1090" />
          </svg>
          <svg class="tile" x="0" y="720" width="640" height="360" viewBox="0 0 1568 1080" preserveAspectRatio="none">
            <path class="fill" d="M0 0H1568V1080H0z" />
            <path class="sea" d="M430 500L447 513 458 530 468 558 490 582 480 593 488 625 505 636 545 643 595 635 615 623 633 620 635 607 655 615 662 598 688 604 698 625 700 650 712 690 716 715 727 748 720 758 712 763 697 780 688 810 695 840 705 865V930L697 947 690 950 694 958 683 956 674 965 690 968 700 985V1100H430z" />
            <path class="sea" d="M712 990L745 965 755 943 780 935 800 920 807 922 830 900 862 878 866 900 870 920 880 915 882 933 893 935 903 958 925 950 918 925 938 920 935 945 950 950 963 990H800L805 965 820 938 772 960 777 975 775 990z" />
            <path class="sea" d="M1010 990L1012 980 1025 975 1028 942 1045 935 1057 912 1062 920 1048 950 1055 970 1075 990zM1150 990L1190 965 1210 955 1215 935 1225 930 1224 938 1218 950 1212 970 1200 990z" />
            <path class="sea" d="M1580 790L1562 800 1565 825 1550 830 1530 850 1520 880 1509 895 1512 915 1521 930 1532 914 1550 920 1565 905 1580 950z" />
            <path class="land" d="M846 965l6-6-4 16zM860 968l5 14zM688 800l5 -10 -2 22z" />
            <path class="isle" d="M466 577l2 14M467 596l7 10-3 10 10 18M493 660l8 5M870 935l4 6" />
            <path class="bd" d="M864 -5L858 72 868 74 864 139 1025 157 1026 130 1100 136 1102 115 1240 124 1241 152 1400 158 1560 161 1562 127 1572 127M900 147L903 163 915 172 928 172 932 178 925 182 915 178 895 187 875 193 860 202 840 222 790 236 750 244 725 235 703 230 700 217 675 217 655 227 630 231 610 225 607 218 595 240 590 252 570 248 550 240 547 262 552 275 535 295 522 290 518 300 523 325 505 332 480 337 462 322 445 322" />
            <path class="bd" d="M785 925L787 887 804 885 807 866 824 868 830 826 835 804 854 804 863 740 883 741 887 698 909 699 914 656 932 658 936 614 942 594 960 594 964 551 980 551 984 531 1003 532 1007 489 1012 466 1029 467 1032 446 1044 446 1046 426 1146 433 1147 456 1163 457 1165 435 1183 435 1185 414 1218 415 1219 438 1335 444 1572 448M1335 444L1328 753 1310 755V774L1276 775 1274 796 1256 797 1253 817 1245 838 1210 837 1207 858 1190 858 1189 902 1196 905 1194 965M1215 957L1288 960V990M1572 738H1561V757L1543 758 1541 802 1525 803 1523 824 1495 825 1493 868 1458 869V912L1463 914V990" />
          </svg>
          <svg class="tile" x="640" y="720" width="640" height="360" viewBox="0 0 1568 1080" preserveAspectRatio="none">
            <path class="land" d="M-10 -10H1223L1232 43 1297 442 1348 451 1351 429 1405 444 1427 400 1490 379 1491 448 1505 465 1545 478 1557 507 1580 525V660L1540 646 1512 638 1500 628 1480 620 1446 605 1455 580 1452 560 1465 545 1475 548 1464 520 1462 490 1490 510 1492 535 1503 578 1497 540 1490 510 1458 470 1450 500 1440 530 1420 560 1395 577 1350 581 1317 573 1290 563 1265 558 1280 535 1272 510 1262 508 1264 497 1250 494 1262 510 1275 530 1262 545 1240 548 1215 538 1120 535 1085 550 1030 570 1012 584 1000 575 975 548 990 545 965 553 940 547 930 548 925 530 912 533 895 520 903 492 910 482 898 490 903 465 900 445 888 480 872 492 880 528 870 530 845 500 830 497 805 500 780 515 750 518 790 495 817 455 795 470 770 490 745 510 775 480 806 450 780 462 755 470 790 440 765 450 778 432 745 450 765 430 735 445 705 440 740 425 762 403 745 410 720 425 700 430 695 410 712 352 742 346 738 340 707 346 697 380 680 405 676 388 672 402 664 380 662 405 655 398 652 412 640 410 650 385 636 408 632 392 628 408 624 380 615 350 613 395 606 408 600 400 598 420 588 410 590 385 583 425 572 440 575 400 597 325 588 330 575 355 555 400 558 420 550 440 535 450 506 445 512 455 510 470 540 455 555 475 545 490 565 478 560 500 540 515 553 545 568 510 575 555 550 575 566 600 545 628 562 632 558 655 548 650 530 665 520 662 515 672 500 668 480 662 476 650 482 638 468 660 464 690 455 675 453 690 447 635 441 640 442 665 450 695 436 690 438 705 424 700 430 725 420 715 415 675 408 700 418 730 400 710 405 735 432 760 400 745 398 755 383 725 390 760 372 758 376 775 365 770 350 830 345 800 362 740 352 760 340 790 328 770 332 800 322 810 330 830 318 822 315 850 306 840 310 825 295 848 298 870 288 862 280 850 284 872 268 868 260 850 240 872 222 868 215 885 195 872 182 850 192 820 240 790 265 770 270 745 287 723 265 730 232 765 210 760 192 735 197 700 205 665 235 610 243 540 232 490 270 468 335 403 345 425 365 430 385 420 400 420 430 430 467 438 469 430 445 425 425 412 400 405 375 385 378 345 382 320 400 290 418 288 425 280 405 284 385 300 378 330 372 347 345 347 317 350 313 338 308 345 303 337 300 348 270 370 255 400 225 418 210 428 195 450 193 470 200 485 195 492 180 490 165 515 142 550 150 575 130 592 132 610 115 625 85 615 65 605 80 620 110 635 118 655 100 700 75 707 48 718 72 725 70 750 50 770 35 765 32 740 28 770 10 780 -10 800z" />
            <path class="land" d="M603 700L608 672 640 630 655 600 655 585 680 560 697 555 660 625 665 645 650 650 658 668 625 685zM712 530L722 508 740 508 745 518 778 512 760 535 745 535 725 567 718 555 735 535zM590 640L582 615 598 605 590 590 605 560 590 555 595 520 607 540 615 500 622 525 612 560 618 600 605 630zM570 625l-6-22 12 10 8 28-8 15zM625 475l8-25 14 10-2 18zM635 575l20-20-8 25zM620 560l14-12-4 16zM630 510l14-8-6 14zM665 545l15-18-8 24zM575 455l10 -5 5 15-10 8zM165 585l10-15-2-20 12-6 5 12-10 8-6 22zM344 378l8-12-3 15zM15 840l10-10 14 10-8 12-10-2zM948 645L955 610 983 588 965 612zM770 775l3-18 8 10zM-5 908L10 925 30 940 48 985H-10z" />
            <path class="isle" d="M800 517l30 0M825 525l25 8M850 540l28 5M890 545l20 1M925 545l30 0M962 556l2 18M964 580v16M970 585l30 -10M1395 550l10 5 8-12 8 4-12 10M1446 605l12-8-6-18 14-14 4-20M1492 510l15-8 20 6M198 893l5-4M216 900l5 2M234 895l8 4M150 948l6 2M428 782l2 2M540 462l20 12M568 580l30 20M560 500l20 20M610 375l5 20M575 650l12-16M592 655l-6-20M510 480l8-10M560 540l8 24-6 20 10 20M555 590l14 8-6 20M552 610l16 4-8 24M566 530l12 18M580 520l4 30 8 10M600 520l-6 30M572 590l8 20 10-6M562 640l16 6M596 640l6-18M544 440l20-6M550 425l18-4M560 455l16-6M630 455l12 6-4 12M710 425l30-8M722 436l24-6M790 470l20-12M880 500l16-10M884 515l16 2M720 500l16 4" />
            <path class="bd" d="M-5 127H28V103L60 102 62 85 65 84M65 -5L68 300 67 314 234 310 235 351 271 352 270 368M68 312L55 299 21 300 22 380 26 385 30 470V556L20 560 18 645 7 648 5 740M-5 447L27 448M695 -5L700 53 647 60 667 258 640 262V273L447 293 435 280M518 288L526 433 501 435 502 465 510 468 515 545 524 547 531 665M470 438L472 468 508 465M1125 -5L1128 8 1145 6 1155 62 1230 43M1297 442L1317 573" />
          </svg>
          <svg class="tile" x="1280" y="720" width="640" height="360" viewBox="0 0 1568 1080" preserveAspectRatio="none">
            <path class="land" d="M-10 508L122 610 135 640 150 690 165 670 190 637 207 605 233 597 237 568 228 522 242 518 246 490 234 483 250 466 270 455 291 430 310 404 345 428 365 445 373 480 382 490 387 512 417 510 430 528 452 535 465 565 476 570 490 588 540 603 570 630 605 657 605 672 645 715 670 745V1000H385L350 955 345 935 320 915 300 895 295 855 310 845 285 832 275 833 240 803 220 808 150 765 115 735 108 708 80 685 40 672 -10 655z" />
            <path class="sea" d="M340 525L355 535 375 565 390 605 408 635 420 632 425 665 445 690 470 725 480 740 490 760 545 748 538 700 543 665 548 710 545 745 560 765 590 790 600 815 625 830 665 842V852L630 848 625 860 665 885 640 900 625 950 605 965 600 990H560L565 960 548 950 540 940 550 990H522L510 945 490 905 480 860 468 818 440 812 415 810 405 835 400 850 400 815 375 800 355 795 345 815 330 808 318 822 300 815 290 830 285 800 300 785 325 788 340 770 330 745 305 735 295 715 270 705 262 680 235 670 200 680 194 692 200 665 190 640 215 662 245 658 255 670 290 688 300 670 290 640 280 618 258 610 285 612 298 635 310 680 325 705 335 740 350 765 385 765 360 755 395 755 405 780 440 782 440 765 425 720 400 660 380 620 365 580 345 545z" />
            <path class="sea" d="M370 865L400 868 430 885 480 890 455 900 435 888 400 880zM450 850L478 862 465 858zM392 918L430 935 460 945 505 960 515 970 470 960 430 965 435 945zM455 700L475 735 470 725zM545 775L575 820 610 870 612 885 575 845 545 790zM305 855l15 25-8-5z" />
            <path class="land" d="M322 795l10-5 6 10-10 6zM365 765l12 6 8-6zM630 905l18-5-8 20zM590 750l8 30-10-8zM620 795l4 35-4-5z" />
            <path class="isle" d="M20 665l5 6M150 765l14-14-8 18M225 640l10 8 14 12M310 660l15-20M270 740l8-18M240 810l35 22M255 815l12 14M345 540l20 40 5 30M545 780l15 40M560 790l20 40M380 875l25 10 40 15M395 920l30 15M430 945l10 20 30 10M470 960l20 10M325 925l60 55M340 930l20 30M350 965l25 10M565 930l-10 30M580 950l20-15M545 940l15-20M585 760l10 20M540 670l4 40M300 790l20 15M310 700l22 15M315 690l4 30M318 735l18-10M610 930l30 8M645 945l4 5M600 945l10-4M435 700l25 40M470 740l-10-30M625 850l20-6M330 935l12 14-4 8 14 6 2 12 16 4M245 812l8 12 10-4 6 12" />
            <path class="bd" d="M291 430L347 510 378 500M347 510L345 490M347 510L341 530M390 594L476 567M237 568L262 572 285 570 318 575 340 590 354 610 345 630 342 672 380 685 398 715 385 735 398 765M645 715L625 790 665 785M480 725L495 730 540 745M480 785L495 805 535 765M300 860L362 905 367 860M362 905L322 918 318 885M450 850l30 8" />
          </svg>
          <circle v-for="(p, i) in pins" :key="i" :cx="p[0]" :cy="p[1]" r="3.700" :fill="p[2] ? '#ffff00' : '#e8704a'" stroke="#3b2a2a" />
        </svg>
      </section>

      <aside class="right">
        <div class="split"><i class="vgrip" /></div>
        <div class="docks">
          <h2>Processing Toolbox<span><svg v-for="n in ['float', 'closebox']" :key="n" class="i11" viewBox="0 0 24 24" v-html="icons[n]" /></span></h2>
          <div class="tools">
            <template v-for="(t, i) in procTools" :key="i">
              <i v-if="t.name === '|'" class="sep" />
              <button v-else :class="{ checked: t.on }" :aria-label="t.name"><svg class="i18" viewBox="0 0 24 24" v-html="icons[t.name]" /><i v-if="t.menu" class="mini" /></button>
            </template>
          </div>
          <div class="field search"><svg class="i14" viewBox="0 0 24 24" v-html="icons.search" /><input type="text" placeholder="Search…" aria-label="Search"></div>
          <div class="box tb">
            <ul class="tree">
              <li v-for="(t, i) in toolbox" :key="t"><i class="exp" /><svg class="i16" viewBox="0 0 24 24" v-html="icons[i ? 'qgis' : 'clock']" />{{ t }}</li>
            </ul>
            <div class="vs"><b class="up" /><em class="t82" /><s /><b class="dn" /></div>
          </div>
          <i class="hgrip" />
          <h2>Results Viewer<span><svg v-for="n in ['float', 'closebox']" :key="n" class="i11" viewBox="0 0 24 24" v-html="icons[n]" /></span></h2>
          <ul class="box results">
            <li class="cur"><svg class="i14" viewBox="0 0 24 24" v-html="icons.sigma" />Statistics [11:05:59PM]</li>
            <li><svg class="i14" viewBox="0 0 24 24" v-html="icons.sigma" />Statistics [11:03:59PM]</li>
          </ul>
          <i class="hgrip tight" />
          <div class="box algo">
            <p><strong>Algorithm</strong>: Statistics<br><strong>File path</strong>: <a href="#">/tmp/processing_OhoQlW/<br>0be281a1e3d14d86a698b82734ac05b8/<br>OUTPUT_HTML_FILE.html</a></p>
            <div class="vs"><b class="up" /><em class="t34" /><s /><b class="dn" /></div>
          </div>
          <i class="hgrip tight" />
          <h2>Identify Results<span><svg v-for="n in ['float', 'closebox']" :key="n" class="i11" viewBox="0 0 24 24" v-html="icons[n]" /></span></h2>
          <div class="tools">
            <template v-for="(n, i) in idTools" :key="i">
              <i v-if="n === '|'" class="sep" />
              <i v-else-if="n === 'v'" class="arrow" />
              <button v-else :aria-label="n"><svg class="i16" viewBox="0 0 24 24" v-html="icons[n]" /></button>
            </template>
          </div>
          <div class="box idbox">
            <table><thead><tr><th class="c1">Feature</th><th>Value</th></tr></thead></table>
          </div>
          <div class="opt"><label for="mode">Mode</label><div class="combo wide"><select id="mode"><option>Current Layer</option></select><i class="arrow" /></div></div>
          <div class="opt off"><label for="view">View</label><div class="combo"><select id="view" disabled><option>Tree</option></select><i class="arrow" /></div></div>
        </div>
      </aside>
    </main>

    <footer class="status">
      <div class="field locate"><svg class="i14" viewBox="0 0 24 24" v-html="icons.search" /><input type="text" placeholder="Type to locate (Ctrl+K)" aria-label="Locate"></div>
      <output>8 features selected on layer airports.</output>
      <label for="coord">Coordinate</label><input id="coord" class="coord" value="-3828653,6568536">
      <svg class="i18 mouse" viewBox="0 0 24 24" v-html="icons.mouse" />
      <label for="scale">Scale</label>
      <div class="spin scale"><input id="scale" value="1:4963766"><button aria-label="Scales"><i class="arrow" /></button></div>
      <svg class="i16 lock" viewBox="0 0 24 24" v-html="icons.lock" />
      <label for="mag">Magnifier</label>
      <div class="spin"><input id="mag" value="100%"><span class="ud"><i class="tu" /><i class="td" /></span></div>
      <label for="rot" class="rl">Rotation</label>
      <div class="spin"><input id="rot" value="0.0 °"><span class="ud"><i class="tu" /><i class="td" /></span></div>
      <label class="render"><input type="checkbox" checked>Render</label>
      <button class="crs"><svg class="i14" viewBox="0 0 24 24" v-html="icons.globe" />EPSG:2964</button>
      <svg class="i16 bub" viewBox="0 0 24 24" v-html="icons.bubble" />
    </footer>

    <section class="dialog" aria-label="Attribute table">
      <div class="dtitle">
        <svg class="i24" viewBox="0 0 24 24" v-html="icons.qgis" />
        <svg class="i18" viewBox="0 0 24 24" v-html="icons.apps" />
        <h2>airports — Features Total: 76, Filtered: 76, Selected: 8 &lt;3&gt;</h2>
        <svg v-for="n in ['wmin', 'wmax', 'wclose']" :key="n" class="i18 ctl" viewBox="0 0 24 24" v-html="icons[n]" />
      </div>
      <div class="tools dt">
        <template v-for="(n, i) in dlgTools" :key="i">
          <i v-if="n === '|'" class="sep" />
          <button v-else :class="{ checked: n === 'funnel' }" :aria-label="n"><svg class="i16" viewBox="0 0 24 24" v-html="icons[n]" /></button>
        </template>
      </div>
      <div class="dbody">
        <div class="flist">
          <div class="expr"><svg class="i16" viewBox="0 0 24 24" v-html="icons.epslens" />Expression<i class="mini" /></div>
          <div class="box fbox">
            <ul>
              <li v-for="(f, i) in features" :key="f" :class="{ cur: i === 0 }"><i :class="{ y: picked.includes(f) }" />{{ f }}</li>
            </ul>
            <div class="vs"><b class="up" /><em class="t87" /><s /><b class="dn" /></div>
          </div>
          <div class="navrow">
            <button v-for="n in ['first', 'prev', 'next', 'last']" :key="n" :aria-label="n"><svg class="i14" viewBox="0 0 24 24" v-html="icons[n]" /></button>
            <span>1 / 76</span>
            <button class="checked bulb" aria-label="highlight"><svg class="i16" viewBox="0 0 24 24" v-html="icons.bulb" /></button>
            <button class="pan" aria-label="pan"><svg class="i16" viewBox="0 0 24 24" v-html="icons.pan" /></button>
            <button aria-label="zoom"><svg class="i16" viewBox="0 0 24 24" v-html="icons.lens" /></button>
          </div>
        </div>
        <div class="dsplit"><i class="vgrip" /></div>
        <form class="frame" @submit.prevent>
          <div v-for="f in form" :key="f.id" class="frow">
            <label :for="'f-' + f.id">{{ f.id }}</label>
            <div class="field fi"><input :id="'f-' + f.id" v-model="f.v" type="text"><svg v-if="f.clear" class="i14" viewBox="0 0 24 24"><path d="M8 3h15v18H8l-8-9z" fill="#a9acae" /><path d="M9 7l9 10M18 7L9 17" stroke="#3a3f43" stroke-width="2" /></svg></div>
            <label v-if="f.cs" class="cs"><input v-model="f.on" type="checkbox">Case sensitive</label>
            <button type="button" class="btn">{{ f.b }}<i class="mini" /></button>
          </div>
          <div class="fbtns">
            <button type="button" class="btn"><u>R</u>eset Form</button>
            <button type="button" class="btn"><u>F</u>lash Features</button>
            <button type="button" class="btn"><u>Z</u>oom to Features</button>
            <span class="pair"><button type="button" class="btn sf"><svg class="i14" viewBox="0 0 24 24" v-html="icons.selform" /><span><u>S</u>elect Features</span></button><button type="button" class="btn ar" aria-label="More"><i class="arrow" /></button></span>
            <span class="pair"><button type="button" class="btn ff">Filter Features</button><button type="button" class="btn ar" aria-label="More"><i class="arrow" /></button></span>
          </div>
        </form>
      </div>
      <div class="dfoot">
        <button class="btn sa"><svg class="i14" viewBox="0 0 24 24" v-html="icons.tablesm" />Show All Features<i class="mini" /></button>
        <span class="tools"><button class="checked" aria-label="form view"><svg class="i16" viewBox="0 0 24 24" v-html="icons.formview" /></button><button aria-label="table view"><svg class="i14" viewBox="0 0 24 24" v-html="icons.tableview" /></button></span>
      </div>
    </section>

    <nav class="dock">
      <div v-for="d in dock" :key="d[0]" class="app">
        <svg viewBox="0 0 48 48" v-html="icons[d[0]]" />
        <span v-if="d[1] === 9" class="bar" />
        <span v-else class="pips"><i v-for="k in d[1]" :key="k" /></span>
      </div>
    </nav>
  </div>
</template>

<style>
body { background: #31363a; }
</style>

<style scoped>
* { box-sizing: border-box; margin: 0; padding: 0; }
.desk { position: relative; display: flex; flex-direction: column; height: 100vh; min-width: 1280px; overflow: hidden; background: #31363a; color: #eceeef; font: 13px/20px "Noto Sans", "Open Sans", sans-serif; white-space: nowrap; }
.desk svg { display: block; flex: none; overflow: visible; }
button, input, select { font: inherit; color: inherit; background: none; border: 0; outline: 0; min-width: 0; }
ul { list-style: none; }
h1, h2 { font-size: 13px; font-weight: 400; }
.i11 { width: 11px; height: 12px; }
.i14 { width: 14px; height: 14px; }
.i16 { width: 16px; height: 16px; }
.i18 { width: 17px; height: 17px; }
.i24 { width: 22px; height: 22px; }
.arrow { width: 0; height: 0; border: 4px solid transparent; border-top: 5px solid #a6a9ab; border-bottom: 0; }
.mini { position: absolute; right: 1px; bottom: 2px; border: 3px solid transparent; border-top: 3px solid #b5b8ba; border-bottom: 0; }

.topbar { display: flex; justify-content: space-between; height: 39px; padding: 5px 1px 0 5px; border-bottom: 1px solid #282c2f; }
.pill { display: flex; justify-content: center; align-items: center; gap: 18px; width: 126px; height: 20px; border-radius: 6px; background: #0d0e0f; }
.tray { display: flex; align-items: center; gap: 8px; height: 20px; font-size: 14px; }
.tray time:first-of-type { margin-left: 1px; }

.wintitle { display: flex; align-items: center; height: 28px; padding: 0 9px 9px 7px; border-bottom: 1px solid #868a8c; color: #808487; }
.wintitle h1, .dtitle h2 { flex: 1; padding-left: 8px; text-align: center; }
.wintitle .dim:nth-child(2), .dtitle svg:nth-child(2) { margin-left: 7px; }
.ctl { margin-left: 9px; }
.dim { color: #85898c; }

.mainbar { display: flex; align-items: center; height: 39px; padding: 0 4px 2px; border-bottom: 1px solid #868a8c; background: linear-gradient(#34393d, #2f3438); box-shadow: inset 0 -1px #25292c; }
.mainbar.last { padding-bottom: 0; border-bottom: 2px solid #25292c; box-shadow: inset 0 -1px #7b7f81; }
.mainbar button { flex: none; width: 33px; display: grid; place-items: center; }
.mainbar .toggled { width: 28px; height: 29px; border: 1px solid #6c7277; background: #4a5056; }
.mainbar .arrow { margin: 0 2px; }
.mainbar .grip + button { margin-left: 3px; }
.grip { width: 5px; height: 18px; background: radial-gradient(circle, #909496 40%, transparent 50%) 0 0 / 3px 3px; }
.sep { width: 1px; height: 16px; margin: 0 3px; background: #2a2e31; }
.covered { width: 871px; }
.one { width: 563px; }
.two { width: 38px; }
.three { width: 237px; }
.late { margin-left: 9px; }

.work { flex: 1; min-height: 0; display: flex; }
.left, .right { display: flex; flex: none; }
.left { width: 183px; }
.right { width: 371px; }
.docks { flex: 1; min-width: 0; display: flex; flex-direction: column; }
.split { display: flex; align-items: center; justify-content: center; width: 7px; background: #31363a; }
.vgrip { width: 2px; height: 18px; background: repeating-linear-gradient(#8e9294 0 2px, transparent 2px 3px); }
.hgrip { align-self: center; flex: none; width: 17px; height: 2px; margin: 3px 0 2px; background: repeating-linear-gradient(90deg, #8e9294 0 2px, transparent 2px 3px); }
.hgrip.tight { margin: 2px 0; }
.docks h2 { display: flex; justify-content: space-between; align-items: center; flex: none; height: 20px; padding: 0 2px 2px 4px; }
.docks h2 span { display: flex; gap: 3px; }
.tools { position: relative; display: flex; align-items: center; flex: none; height: 30px; padding: 0 0 2px 3px; }
.tools button, .navrow button { position: relative; display: grid; place-items: center; width: 25px; height: 22px; }
.tools .checked, .navrow .checked { width: 22px; margin: 0 2px 0 1px; border: 1px solid #6c7277; border-radius: 2px; background: #4a5056; }
.tools .arrow { margin: 0 3px 0 2px; }
.box { background: #2a2f32; border: 1px solid #25292c; overflow: hidden; }
.browser { height: 82px; flex: none; }
.brow { display: flex; height: 68px; }
.tree { flex: 1; min-width: 0; overflow: hidden; }
.tree li, .results li { display: flex; align-items: center; height: 20px; padding-left: 6px; }
.tree svg { margin: 0 6px 0 9px; }
.exp { flex: none; width: 5px; height: 0; border: 4px solid transparent; border-left: 5px solid #a6a9ab; border-right: 0; }
.exp.none { visibility: hidden; }
.vs { display: flex; flex-direction: column; flex: none; width: 14px; background: #474e55; border: 1px solid #25292c; }
.vs b, .hs b { flex: none; width: 12px; height: 13px; display: grid; place-items: center; background: #555c62; border: 1px solid #6d7378; }
.vs b::before, .hs b::before { content: ""; width: 8px; height: 5px; background: #b6b9bb; clip-path: polygon(50% 0, 100% 100%, 0 100%); }
.vs .dn::before { clip-path: polygon(0 0, 100% 0, 50% 100%); }
.vs em, .hs em { display: block; flex: none; margin: 1px 0; background: linear-gradient(90deg, #626970, #545b61); border: 1px solid #6b7176; }
.vs s, .hs s { flex: 1; }
.t26 { height: 26px; } .t82 { height: 82px; } .t34 { height: 34px; } .t87 { height: 87px; }
.hs { display: flex; height: 13px; background: #474e55; }
.hs em { width: 108px; margin: 0 1px; }
.hs .lf::before { width: 5px; height: 8px; clip-path: polygon(100% 0, 100% 100%, 0 50%); }
.hs .rt::before { width: 5px; height: 8px; clip-path: polygon(0 0, 100% 50%, 0 100%); }
.hs u { width: 14px; background: #2a2f32; }
.layers { flex: 1; min-height: 0; color: #898d8f; font-weight: 700; font-style: italic; }
.layers li { display: flex; align-items: center; height: 20px; padding-left: 7px; }
.layers .on { color: #f2f3f3; font-style: normal; }
.layers .cur, .results .cur, .fbox .cur { background: #593657; }
.layers .cur .nm { text-decoration: underline; text-underline-offset: 2px; }
.layers label { display: flex; align-items: center; flex: 1; }
.layers .exp { margin-right: 11px; }
input[type="checkbox"] { appearance: none; flex: none; display: grid; place-items: center; width: 14px; height: 14px; border: 1px solid #24282a; background: #2b3033; border-radius: 1px; }
input[type="checkbox"]:checked::before { content: ""; width: 9px; height: 10px; background: #eee; clip-path: polygon(0 55%, 18% 50%, 36% 78%, 84% 0, 100% 0, 42% 100%, 30% 100%); }
.sym { width: 16px; height: 16px; margin: 0 6px; display: grid; place-items: center; }
.sym.pt i { width: 5px; height: 6px; border-radius: 3px; }
.sym.ln { width: 14px; }
.sym.ln i { width: 14px; height: 2px; }
.sym.sq i { width: 16px; height: 16px; border: 1px solid rgba(0, 0, 0, .35); }
.mem { margin-right: 7px; }

.map { flex: 1; min-width: 0; background: #fff; overflow: hidden; }
.map > svg { width: 100%; height: 100%; overflow: hidden; }
.desk .tile { overflow: hidden; }
.tile path { vector-effect: non-scaling-stroke; stroke: #232323; stroke-width: 1; stroke-linejoin: round; }
.tile .land { fill: #8d5a99; }
.tile .fill { fill: #8d5a99; stroke: none; }
.tile .sea { fill: #fff; }
.tile .bd, .tile .isle { fill: none; }

.field { position: relative; display: flex; align-items: center; height: 26px; border: 1px solid #24282a; border-radius: 3px; background: #2a2f32; }
.field input { flex: 1; width: 100%; }
input::placeholder { color: #85898b; opacity: 1; }
.search { flex: none; padding: 0 7px; gap: 7px; }
.tb { display: flex; height: 211px; flex: none; }
.tb .tree li { padding-left: 8px; }
.tb .tree svg { margin: 0 6px 0 10px; }
.results { height: 191px; flex: none; }
.results li { padding-left: 4px; }
.results svg { margin-right: 7px; }
.algo { display: flex; height: 70px; flex: none; }
.algo p { flex: 1; padding: 3px 4px; line-height: 18px; }
.algo a { color: #2980b9; text-underline-offset: 2px; }
.idbox { flex: 1; min-height: 0; }
table { width: 100%; border-collapse: collapse; table-layout: fixed; }
th { height: 21px; padding-left: 3px; text-align: left; font-weight: 400; line-height: 20px; background: linear-gradient(#5a6168, #4c5359); border-right: 1px solid #767c81; }
.c1 { width: 98px; }
.opt { display: flex; align-items: center; flex: none; height: 32px; padding: 0 5px; gap: 6px; }
.idbox + .opt { margin-top: 2px; }
.opt.off { margin-bottom: 2px; }
.combo { position: relative; display: flex; align-items: center; width: 78px; height: 25px; border: 1px solid #23272a; border-radius: 3px; background: linear-gradient(#5d646b, #4f565c); box-shadow: inset 0 0 0 1px #686e74; }
.wide { flex: 1; }
.combo select { appearance: none; width: 100%; height: 24px; padding-left: 4px; opacity: 1; }
.combo .arrow { position: absolute; right: 7px; top: 10px; }
.off { color: #73787b; }
.off .arrow { border-top-color: #73787b; }

.status { display: flex; align-items: center; flex: none; height: 33px; padding: 0 6px 0 4px; border-top: 1px solid #25292c; font-size: 11px; }
.locate { width: 235px; padding: 0 7px; gap: 7px; font-size: 13px; }
.status output { flex: 1; margin-left: 8px; color: #0b0c0d; }
.coord { width: 98px; height: 26px; margin: 0 12px 0 9px; padding-left: 4px; border: 1px solid #24282a; border-radius: 3px; }
.mouse { margin-right: 11px; }
.spin { display: flex; height: 26px; width: 90px; margin-left: 4px; border: 1px solid #24282a; border-radius: 3px; background: #2a2f32; }
.spin input { flex: 1; width: 40px; padding-left: 3px; }
.scale { width: 87px; margin-left: 3px; }
.spin button, .ud { display: flex; flex-direction: column; gap: 5px; align-items: center; justify-content: center; width: 13px; background: #555c62; border: 1px solid #686e74; }
.spin button { width: 19px; }
.tu, .td { width: 7px; height: 4px; background: #b6b9bb; clip-path: polygon(50% 0, 100% 100%, 0 100%); }
.td { clip-path: polygon(0 0, 100% 0, 50% 100%); }
.lock { margin: 0 7px 0 11px; }
.rl { margin-left: 10px; }
.spin + .render { margin-left: 8px; }
.render, .crs { display: flex; align-items: center; gap: 5px; }
.crs { margin-left: 18px; gap: 3px; }
.bub { margin-left: 25px; }

.dialog { position: absolute; left: 216px; top: 72px; width: 893px; height: 573px; display: flex; flex-direction: column; border-radius: 14px; background: #31363a; box-shadow: 0 0 7px rgba(0, 0, 0, .55); }
.dtitle { display: flex; align-items: center; height: 36px; padding: 0 9px 0 7px; }
.tools.dt { height: 30px; padding: 0 0 0 7px; }
.dbody { display: flex; flex: 1; min-height: 0; padding: 0 3px 0 4px; }
.flist { display: flex; flex-direction: column; width: 256px; margin-bottom: 14px; }
.expr { position: relative; display: flex; align-items: center; gap: 1px; height: 28px; padding-left: 4px; }
.expr .mini { bottom: 5px; right: 2px; }
.fbox { display: flex; flex: 1; min-height: 0; }
.fbox ul { flex: 1; overflow: hidden; }
.fbox li { display: flex; align-items: center; gap: 10px; height: 24px; padding-left: 4px; }
.fbox li i { width: 13px; height: 13px; margin-bottom: 4px; border: 1px solid #8b8e90; background: #ebebeb; }
.fbox li .y { border-color: #c4a000; background: #fde74c; }
.navrow { display: flex; align-items: center; height: 27px; padding-bottom: 2px; font-size: 15px; }
.navrow span { margin: 2px 23px 0 1px; }
.navrow .pan { margin-left: 19px; }
.dsplit { width: 4px; display: flex; justify-content: center; align-items: center; }
.frame { flex: 1; display: flex; flex-direction: column; padding: 18px 18px 9px 18px; border: 2px solid #272b2e; margin-top: 1px; margin-bottom: 17px; }
.frow { display: flex; align-items: center; height: 26px; margin-bottom: 6px; }
.frow > label:first-child { width: 63px; }
.fi { flex: 1; padding: 0 7px 0 3px; }
.cs { display: flex; align-items: center; gap: 5px; margin: 0 7px 0 6px; }
.btn { position: relative; display: flex; align-items: center; justify-content: center; height: 25px; border: 1px solid #23272a; border-radius: 3px; background: linear-gradient(#5d646b, #4f565c); box-shadow: inset 0 0 0 1px #686e74; padding: 0 6px; }
.frow .btn { margin-left: 6px; }
.btn u { text-underline-offset: 3px; }
.fbtns { display: flex; align-items: center; gap: 7px; margin: auto -8px 0 -9px; }
.fbtns .btn { padding: 0 3px; }
.fbtns > .btn:first-child { padding: 0 4px; margin-right: auto; }
.pair { display: flex; gap: 1px; }
.fbtns .sf { gap: 3px; width: 126px; justify-content: flex-start; }
.fbtns .ff { width: 100px; }
.fbtns .ar { width: 11px; padding: 0; }
.dfoot { display: flex; align-items: center; justify-content: space-between; height: 37px; margin-top: -17px; padding: 0 6px 3px 7px; }
.dfoot .btn { width: 142px; justify-content: flex-start; gap: 3px; padding: 0 3px; }

.dock { position: absolute; left: 50%; bottom: 5px; transform: translateX(-50%); display: flex; gap: 6px; padding: 7px 14px 0; height: 60px; border-radius: 12px; background: rgba(42, 46, 50, .68); box-shadow: 0 0 0 2px rgba(130, 130, 130, .35); }
.app { display: flex; flex-direction: column; align-items: center; width: 52px; }
.app svg { width: 44px; height: 44px; }
.pips { display: flex; flex: none; gap: 3px; margin-top: 1px; }
.pips i { width: 5px; height: 5px; border-radius: 3px; background: #a4529a; }
.bar { flex: none; align-self: stretch; height: 5px; margin: 1px -3px 0; border-radius: 3px; background: #a4529a; }
</style>
